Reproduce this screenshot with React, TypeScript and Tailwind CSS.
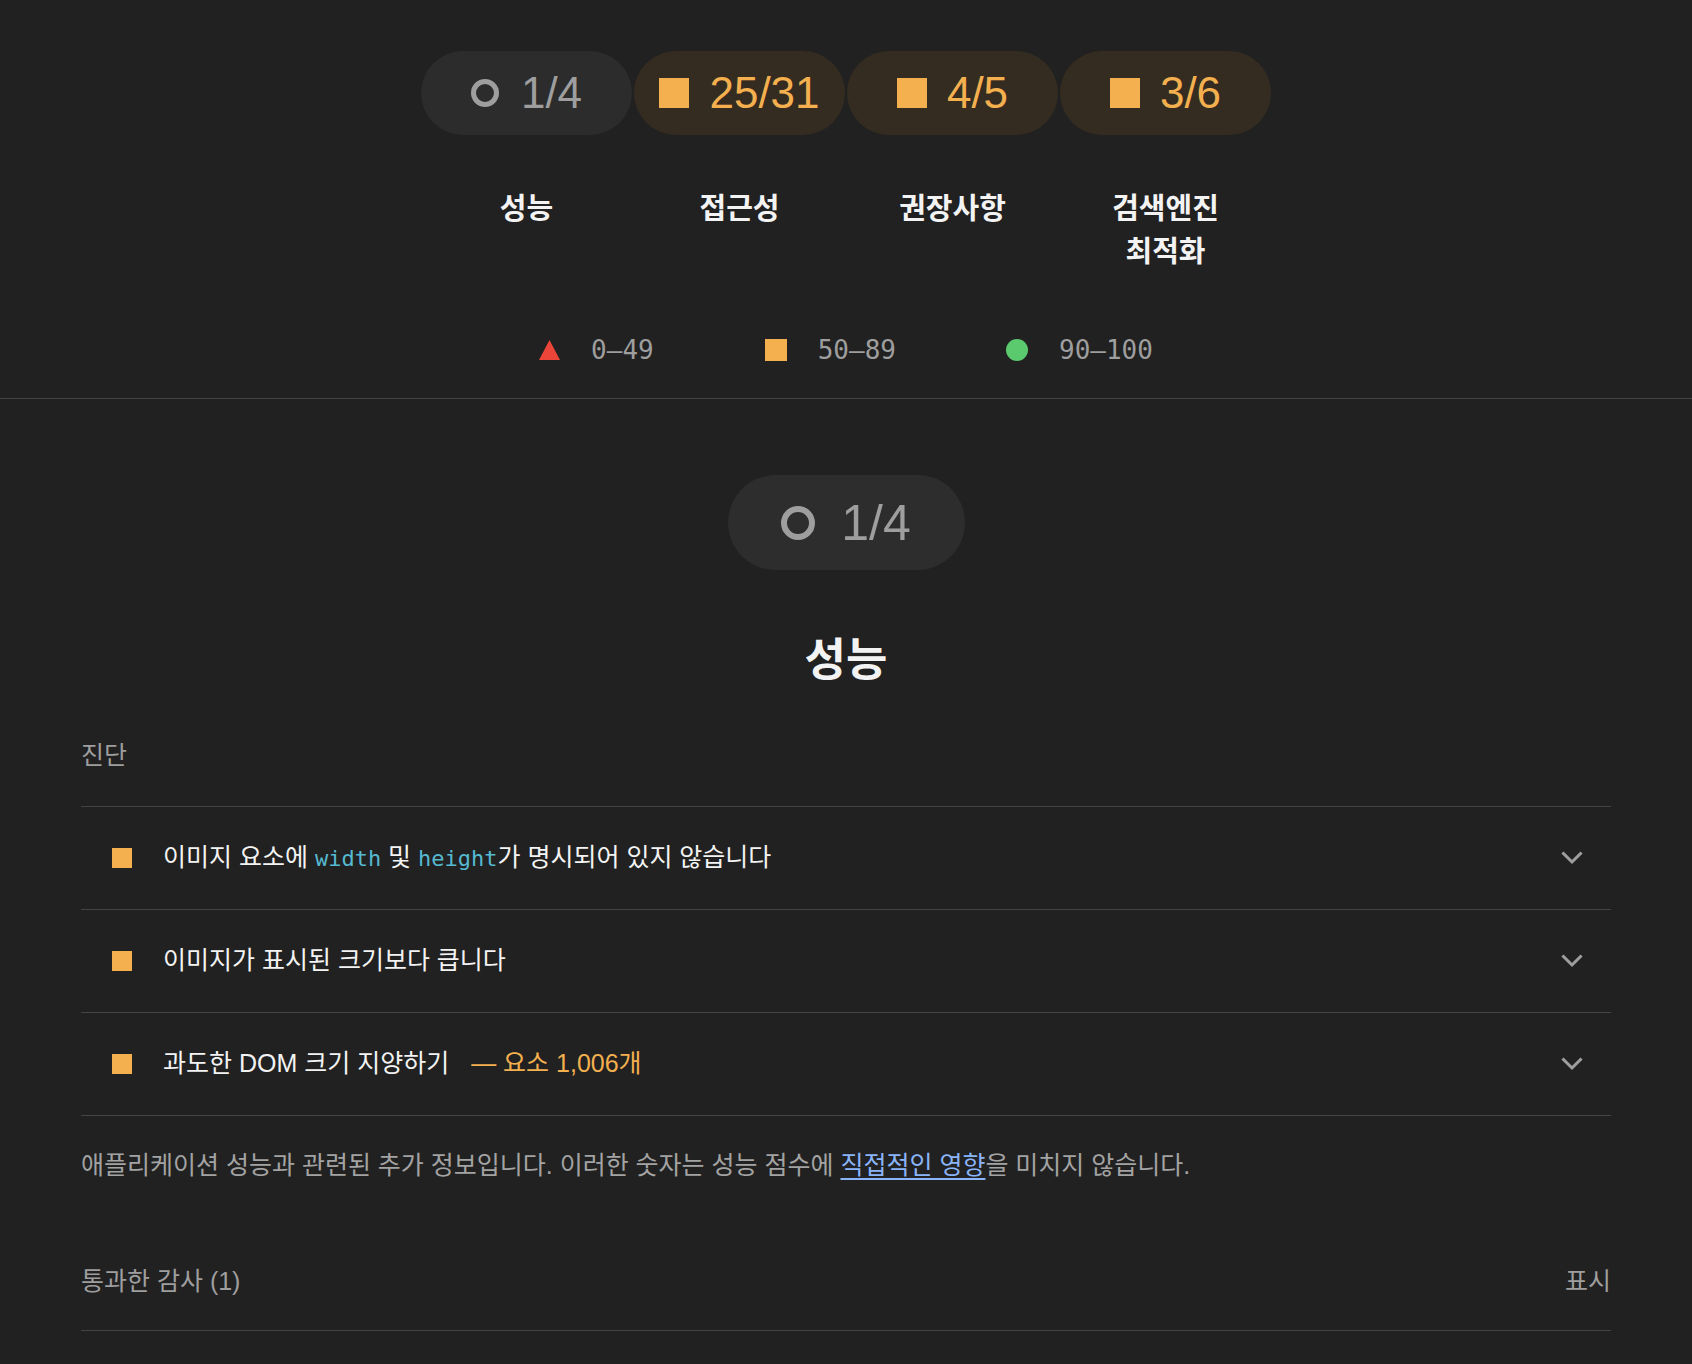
import React from 'react';

const sans = '"Liberation Sans", "Noto Sans CJK KR", sans-serif';
const mono = '"DejaVu Sans Mono", "Noto Sans CJK KR", monospace';

type Gauge = { kind: 'neutral' | 'average'; value: string; label: string[] };

const gauges: Gauge[] = [
  { kind: 'neutral', value: '1/4', label: ['성능'] },
  { kind: 'average', value: '25/31', label: ['접근성'] },
  { kind: 'average', value: '4/5', label: ['권장사항'] },
  { kind: 'average', value: '3/6', label: ['검색엔진', '최적화'] },
];

const Ring = ({ size, stroke }: { size: number; stroke: number }) => (
  <svg width={size} height={size} viewBox={`0 0 ${size} ${size}`}>
    <circle cx={size / 2} cy={size / 2} r={(size - stroke) / 2} fill="none" stroke="#9e9e9e" strokeWidth={stroke} />
  </svg>
);

const Chevron = () => (
  <svg width="22" height="14" viewBox="0 0 22 14" fill="none">
    <path d="M2.5 2.5 L11 11 L19.5 2.5" stroke="#9e9e9e" strokeWidth="3" strokeLinecap="square" />
  </svg>
);

const Code = ({ children }: { children: React.ReactNode }) => (
  <span className="text-[22px] text-[#56b9d2]" style={{ fontFamily: mono }}>
    {children}
  </span>
);

const AuditRow = ({ children }: { children: React.ReactNode }) => (
  <div className="flex h-[103px] items-center border-b border-[#444444] pl-[31px] pr-[28px]">
    <div className="h-[20px] w-[20px] shrink-0 bg-[#f4b04f]" />
    <div className="ml-[31px] flex-1 text-[25px] text-[#f3f3f3]">{children}</div>
    <Chevron />
  </div>
);

const App: React.FC = () => {
  return (
    <div className="min-h-screen w-full bg-[#212121]" style={{ fontFamily: sans }}>
      {/* summary gauges */}
      <div className="border-b border-[#444444] pb-[30px] pt-[51px]">
        <div className="flex items-start justify-center gap-[2px]">
          {gauges.map((g) => (
            <div key={g.value} className="flex w-[211px] flex-col items-center">
              <div
                className={
                  g.kind === 'neutral'
                    ? 'flex h-[84px] w-full items-center justify-center gap-[22px] rounded-full bg-[#2c2c2c]'
                    : 'flex h-[84px] w-full items-center justify-center gap-[20px] rounded-full bg-[#352c21]'
                }
              >
                {g.kind === 'neutral' ? (
                  <Ring size={28} stroke={5} />
                ) : (
                  <div className="h-[30px] w-[30px] bg-[#f4b04f]" />
                )}
                <span
                  className={
                    g.kind === 'neutral'
                      ? 'text-[44px] leading-none text-[#9e9e9e]'
                      : 'text-[44px] leading-none text-[#f4b04f]'
                  }
                >
                  {g.value}
                </span>
              </div>
              <div className="mt-[53px] text-center text-[29px] font-bold leading-[43px] text-[#f3f3f3]">
                {g.label.map((l) => (
                  <div key={l}>{l}</div>
                ))}
              </div>
            </div>
          ))}
        </div>

        <div
          className="mt-[58px] flex items-center justify-center text-[26px] leading-[36px] text-[#9e9e9e]"
          style={{ fontFamily: mono }}
        >
          <div className="flex items-center gap-[31px]">
            <svg width="21" height="20" viewBox="0 0 21 20">
              <polygon points="10.5,0 21,20 0,20" fill="#eb4438" />
            </svg>
            <span>0–49</span>
          </div>
          <div className="ml-[111px] flex items-center gap-[31px]">
            <div className="h-[22px] w-[22px] bg-[#f4b04f]" />
            <span>50–89</span>
          </div>
          <div className="ml-[110px] flex items-center gap-[31px]">
            <div className="h-[22px] w-[22px] rounded-full bg-[#5bc96e]" />
            <span>90–100</span>
          </div>
        </div>
      </div>

      {/* performance category */}
      <div className="flex flex-col items-center pt-[76px]">
        <div className="flex h-[95px] w-[237px] items-center justify-center gap-[26px] rounded-full bg-[#2d2d2d]">
          <Ring size={34} stroke={6} />
          <span className="text-[50px] leading-none text-[#9e9e9e]">1/4</span>
        </div>
        <h2 className="mt-[65px] text-[45px] font-bold leading-[52px] text-[#f3f3f3]">성능</h2>
      </div>

      <div className="mx-[81px]">
        <div className="mt-[50px] border-b border-[#444444] pb-[33px] text-[25px] leading-[36px] text-[#9e9e9e]">
          진단
        </div>

        <AuditRow>
          이미지 요소에 <Code>width</Code> 및 <Code>height</Code>가 명시되어 있지 않습니다
        </AuditRow>
        <AuditRow>이미지가 표시된 크기보다 큽니다</AuditRow>
        <AuditRow>
          과도한 DOM 크기 지양하기
          <span className="ml-[22px] text-[#f4b04f]">— 요소 1,006개</span>
        </AuditRow>

        <p className="mt-[31px] text-[25px] leading-[36px] text-[#a3a3a3]">
          애플리케이션 성능과 관련된 추가 정보입니다. 이러한 숫자는 성능 점수에{' '}
          <a className="text-[#8ab4f8] underline underline-offset-[4px]" href="#">
            직접적인 영향
          </a>
          을 미치지 않습니다.
        </p>

        <div className="mt-[80px] flex items-center justify-between border-b border-[#444444] pb-[31px] text-[25px] leading-[36px] text-[#9e9e9e]">
          <span>통과한 감사 (1)</span>
          <span>표시</span>
        </div>
      </div>
    </div>
  );
};

export default App;
